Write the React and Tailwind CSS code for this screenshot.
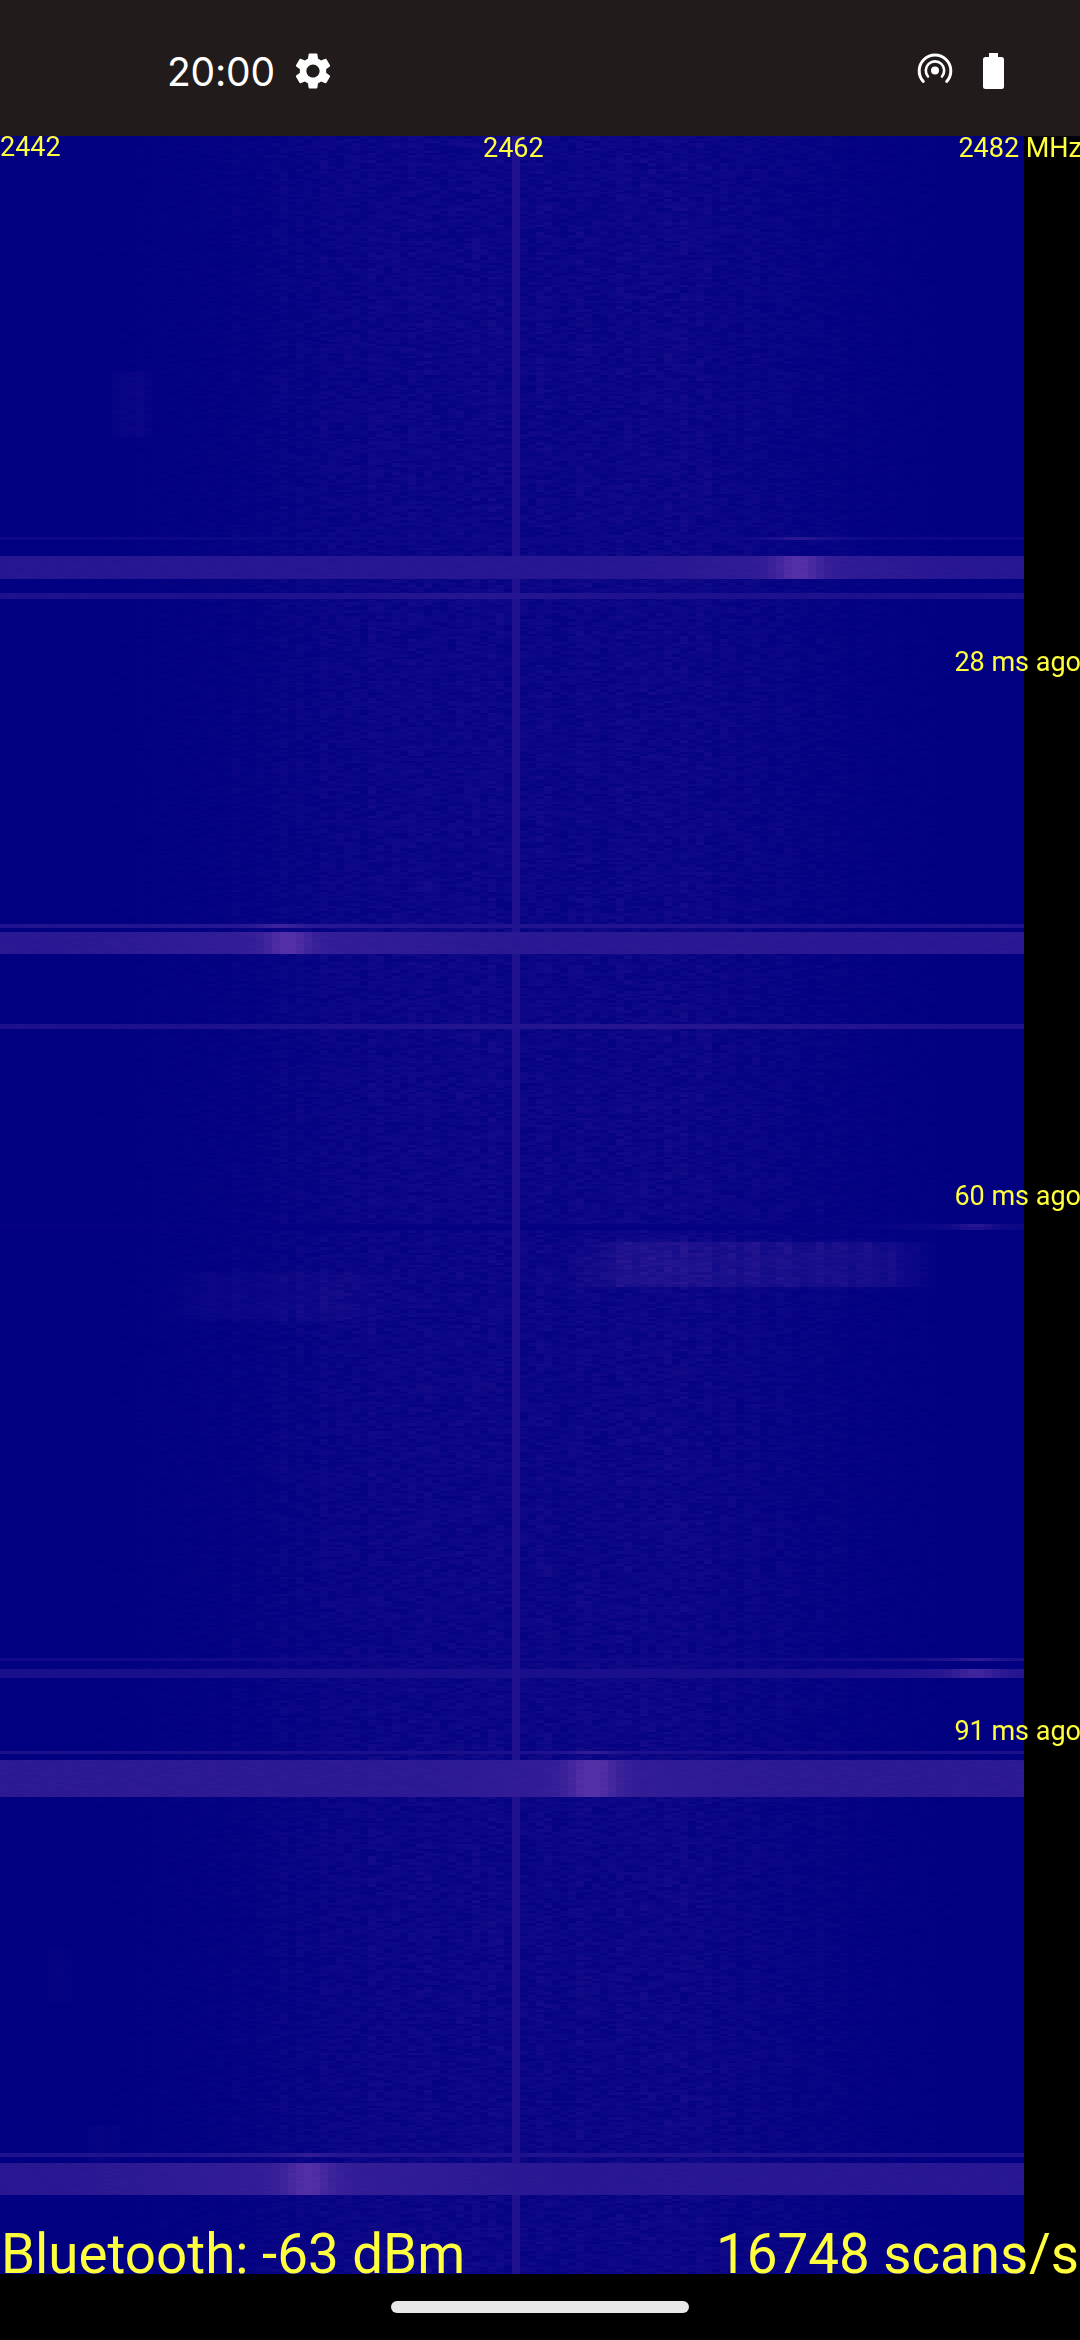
import React, { useEffect, useRef } from "react";

const W = 1024;
const TOP = 136;
const H = 2138;

const BANDS = [
  [537, 540, 0.16, [[800, 0.25, 25, 0.08, 70]]],
  [556, 579, 0.46, [[798, 0.42, 22, 0.12, 110]]],
  [593, 599, 0.34, [[480, 0.0, 10, 0.1, 130]]],
  [924, 928, 0.4, [[280, 0.25, 20, 0.08, 100]]],
  [932, 954, 0.5, [[288, 0.4, 20, 0.12, 130]]],
  [1024, 1029, 0.34, [[650, 0.0, 10, 0.1, 300]]],
  [1224, 1227, 0.06, [[975, 0.28, 18, 0.12, 90]]],
  [1227, 1230, 0.05, [[975, 0.2, 18, 0.1, 90]]],
  [1658, 1661, 0.2, [[975, 0.2, 22, 0.14, 90]]],
  [1669, 1678, 0.3, [[975, 0.3, 22, 0.16, 90]]],
  [1751, 1754, 0.32, [[592, 0.22, 20, 0.06, 70]]],
  [1760, 1797, 0.52, [[592, 0.42, 22, 0.1, 100]]],
  [2153, 2157, 0.38, [[310, 0.15, 20, 0.05, 80]]],
  [2163, 2195, 0.48, [[308, 0.36, 22, 0.14, 160]]],
];

const BLOBS = [
  [560, 950, 1238, 1288, 0.22],
  [150, 400, 1268, 1322, 0.08],
  [108, 156, 368, 438, 0.09],
  [40, 74, 1945, 2004, 0.07],
  [82, 124, 2122, 2164, 0.07],
];

function smooth(a, b, x) {
  const t = Math.min(1, Math.max(0, (x - a) / (b - a)));
  return t * t * (3 - 2 * t);
}

function drawSpectrogram(ctx) {
  let s = 12345;
  const rnd = () => {
    s = (s * 1664525 + 1013904223) >>> 0;
    return s / 4294967296;
  };
  const gain = [];
  for (let c = 0; c < 128; c++) gain.push(0.8 + rnd() * 0.4);
  const paint = (x, y, w, h, l) => {
    const v = Math.min(1, l);
    ctx.fillStyle = `rgb(${Math.round(v * 84)},${Math.round(v * 48)},${Math.round(128 + v * 38)})`;
    ctx.fillRect(x, y, w, h);
  };
  let y = 0;
  while (y < H) {
    const rowH = rnd() < 0.5 ? 2 : 3;
    const pageY = y + TOP;
    for (let c = 0; c < 128; c++) {
      const x = c * 8;
      const cx = x + 4;
      const env = smooth(40, 440, cx) * (1 - smooth(660, 1020, cx));
      const r = rnd();
      let l = env * gain[c] * (0.06 + 0.15 * r);
      for (const [x0, x1, y0, y1, b] of BLOBS) {
        const w = Math.min((x1 - x0) * 0.25, 70);
        const k = smooth(x0, x0 + w, cx) * (1 - smooth(x1 - w, x1, cx)) * smooth(y0, y0 + 5, pageY) * (1 - smooth(y1 - 5, y1, pageY));
        if (k > 0) l += b * k * gain[c] * (0.8 + 0.3 * rnd());
      }
      if (x === 512) l = Math.max(l, 0.38);
      paint(x, y, 8, rowH, l);
    }
    y += rowH;
  }
  for (const [y0, y1, base, spots] of BANDS) {
    let yy = y0;
    while (yy < y1) {
      const h = Math.min(y1 - yy, y1 - y0 > 8 ? 2 : y1 - y0);
      for (let c = 0; c < 128; c++) {
        const cx = c * 8 + 4;
        let l = base;
        for (const [p, a1, s1, a2, s2] of spots) {
          l += a1 * Math.exp(-(((cx - p) / s1) ** 2)) + a2 * Math.exp(-(((cx - p) / s2) ** 2));
        }
        l *= 0.97 + 0.06 * rnd();
        if (c * 8 === 512) l = Math.max(l, 0.38);
        paint(c * 8, yy - TOP, 8, h, l);
      }
      yy += h;
    }
  }
}

function Spectrogram() {
  const ref = useRef(null);
  useEffect(() => {
    drawSpectrogram(ref.current.getContext("2d"));
  }, []);
  return <canvas ref={ref} width={W} height={H} className="block w-[1024px] h-[2138px] bg-[#000080]" />;
}

function StatusBar() {
  return (
    <div className="h-[136px] shrink-0 bg-[#211b1b] flex items-center justify-between pt-[6px] pl-[167px] pr-[76px] text-white">
      <div className="flex items-center gap-[16px]">
        <span className="text-[39px] leading-none font-['Inter',sans-serif] tracking-[-0.2px]">20:00</span>
        <svg width="44" height="44" viewBox="0 0 24 24" fill="#fff">
          <path d="M19.14 12.94c.04-.3.06-.61.06-.94 0-.32-.02-.64-.07-.94l2.03-1.58c.18-.14.23-.41.12-.61l-1.92-3.32c-.12-.22-.37-.29-.59-.22l-2.39.96c-.5-.38-1.03-.7-1.62-.94l-.36-2.54c-.04-.24-.24-.41-.48-.41h-3.84c-.24 0-.43.17-.47.41l-.36 2.54c-.59.24-1.13.57-1.62.94l-2.39-.96c-.22-.08-.47 0-.59.22L2.74 8.87c-.12.21-.08.47.12.61l2.03 1.58c-.05.3-.09.63-.09.94s.02.64.07.94l-2.03 1.58c-.18.14-.23.41-.12.61l1.92 3.32c.12.22.37.29.59.22l2.39-.96c.5.38 1.03.7 1.62.94l.36 2.54c.05.24.24.41.48.41h3.84c.24 0 .44-.17.47-.41l.36-2.54c.59-.24 1.13-.56 1.62-.94l2.39.96c.22.08.47 0 .59-.22l1.92-3.32c.12-.22.07-.47-.12-.61l-2.01-1.58zM12 15.6c-1.98 0-3.6-1.62-3.6-3.6s1.62-3.6 3.6-3.6 3.6 1.62 3.6 3.6-1.62 3.6-3.6 3.6z" />
        </svg>
      </div>
      <div className="flex items-center gap-[29px]">
        <svg width="38" height="38" viewBox="0 0 38 38" fill="none" stroke="#fff" strokeLinecap="round">
          <path d="M7.300 29.500A15.800 15.800 0 1 1 30.700 29.500" strokeWidth="3" />
          <path d="M12 24.500A9.200 9.200 0 1 1 26 24.500" strokeWidth="2.600" />
          <circle cx="19" cy="18.500" r="4" fill="#fff" stroke="none" />
        </svg>
        <svg width="21" height="36" viewBox="0 0 21 36" fill="#fff">
          <path d="M6 0h9v4h3.500A2.500 2.500 0 0 1 21 6.500V33.500A2.500 2.500 0 0 1 18.500 36H2.500A2.500 2.500 0 0 1 0 33.500V6.500A2.500 2.500 0 0 1 2.500 4H6z" />
        </svg>
      </div>
    </div>
  );
}

export default function App() {
  const label = "absolute text-[27px] leading-[32px] whitespace-nowrap";
  return (
    <div className="w-[1080px] h-[2340px] bg-black flex flex-col overflow-hidden font-['Roboto',sans-serif] text-[#ffff3d]">
      <StatusBar />
      <div className="relative h-[2138px] shrink-0 overflow-hidden">
        <Spectrogram />
        <span className={`${label} left-0 top-[-5px]`}>2442</span>
        <span className={`${label} left-[483px] top-[-4px]`}>2462</span>
        <span className={`${label} right-[-2px] top-[-4px]`}>2482 MHz</span>
        <span className={`${label} right-[-1px] top-[510px]`}>28 ms ago</span>
        <span className={`${label} right-[-1px] top-[1044px]`}>60 ms ago</span>
        <span className={`${label} right-[-1px] top-[1579px]`}>91 ms ago</span>
        <div className="absolute inset-x-0 bottom-[-12px] flex justify-between pl-[1px] pr-[1px] text-[54.7px] leading-[64px] whitespace-nowrap">
          <span>Bluetooth: -63 dBm</span>
          <span>16748 scans/s</span>
        </div>
      </div>
      <div className="flex-1 flex justify-center pt-[27px]">
        <div className="w-[298px] h-[12px] rounded-full bg-[#e8e8e8]" />
      </div>
    </div>
  );
}
